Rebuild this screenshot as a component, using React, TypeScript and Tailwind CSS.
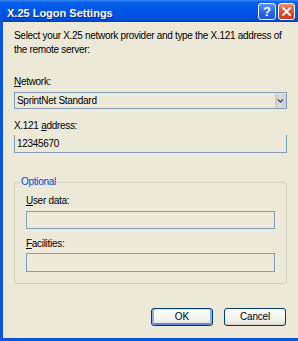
import React from "react";

const font = "font-['Liberation_Sans',Arial,sans-serif]";

function Label({ children }: { children: React.ReactNode }) {
  return (
    <div className="text-[10px] leading-[14px] tracking-[-0.3px] text-black">
      {children}
    </div>
  );
}

export default function App() {
  return (
    <div className={`w-[298px] h-[341px] flex flex-col overflow-hidden bg-[#ece9d8] ${font}`}>
      {/* Title bar */}
      <div className="h-[22px] flex items-center justify-between pl-[7px] pr-[3px] bg-[linear-gradient(180deg,#3b8cf6_0%,#0a60ea_10%,#0058e6_30%,#0054e3_60%,#0050db_85%,#0042bd_100%)]">
        <span className="text-white font-bold text-[11px] leading-[14px] pt-[3px] [text-shadow:1px_1px_0_#0a2a8a]">
          X.25 Logon Settings
        </span>
        <div className="flex items-center gap-[2px]">
          <div className="w-[18px] h-[17px] rounded-[3px] border border-white bg-[linear-gradient(180deg,#5b95f8_0%,#2a67ec_50%,#1c55dc_100%)] flex items-center justify-center">
            <span className="text-white font-bold text-[13px] leading-none">?</span>
          </div>
          <div className="w-[17px] h-[17px] rounded-[3px] border border-white bg-[linear-gradient(180deg,#f08a6a_0%,#e2532f_50%,#cc3a16_100%)] flex items-center justify-center">
            <svg width="9" height="9" viewBox="0 0 9 9">
              <path d="M1 1 L8 8 M8 1 L1 8" stroke="white" strokeWidth="1.8" strokeLinecap="square" />
            </svg>
          </div>
        </div>
      </div>

      {/* Body */}
      <div className="flex-1 flex flex-col border-l-[3px] border-b-[3px] border-[#0a55e0] pl-[11px] pr-[11px] pt-[7px]">
        <div className="text-[10px] leading-[14px] tracking-[-0.3px] text-black">
          Select your X.25 network provider and type the X.121 address of
          <br />
          the remote server:
        </div>

        <div className="mt-[18px]">
          <Label>
            <u>N</u>etwork:
          </Label>
        </div>
        <div className="mt-[3px] h-[17px] border border-[#7f9db9] flex items-center justify-between">
          <span className="pl-[2px] text-[10px] leading-[14px] tracking-[-0.3px] text-black">
            SprintNet Standard
          </span>
          <div className="w-[11px] h-[14px] mr-[0px] rounded-[1px] bg-[linear-gradient(90deg,#c9c9c2_0%,#dcdcd6_40%,#d2d2cc_100%)] flex items-center justify-center">
            <svg width="7" height="6" viewBox="0 0 7 6">
              <path d="M1 1.5 L3.5 4 L6 1.5" stroke="#2b4f9c" strokeWidth="1.4" fill="none" />
            </svg>
          </div>
        </div>

        <div className="mt-[10px]">
          <Label>
            X.121 <u>a</u>ddress:
          </Label>
        </div>
        <div className="mt-[2px] h-[18px] border-x border-b border-[#7f9db9] flex items-center">
          <span className="pl-[2px] text-[10px] leading-[14px] tracking-[-0.3px] text-black">
            12345670
          </span>
        </div>

        {/* Group box */}
        <div className="relative mt-[29px] h-[102px] border border-[#d0d0bf] rounded-[3px] px-[11px] pt-[11px] flex flex-col">
          <span className="absolute left-[5px] top-[-8px] px-[1px] bg-[#ece9d8] text-[10px] leading-[14px] tracking-[-0.3px] text-[#0046d5]">
            Optional
          </span>
          <Label>
            <u>U</u>ser data:
          </Label>
          <div className="mt-[3px] h-[18px] border border-[#7f9db9]" />
          <div className="mt-[8px]">
            <Label>
              <u>F</u>acilities:
            </Label>
          </div>
          <div className="mt-[2px] h-[19px] border border-[#7f9db9]" />
        </div>

        {/* Buttons */}
        <div className="mt-[24px] flex justify-end gap-[11px] pr-[1px]">
          <div className="w-[62px] h-[18px] rounded-[3px] border border-[#003c74] bg-[linear-gradient(180deg,#ffffff_0%,#f3f3ef_60%,#e3e2da_100%)] shadow-[inset_2px_0_0_#89ade4,inset_-2px_0_0_#89ade4,inset_0_-2px_0_#5c86d6,inset_0_1px_0_#cde0fb] flex items-center justify-center">
            <span className="text-[10px] leading-[14px] text-black">OK</span>
          </div>
          <div className="w-[62px] h-[18px] rounded-[3px] border border-[#003c74] bg-[linear-gradient(180deg,#ffffff_0%,#f3f3ef_60%,#e3e2da_100%)] shadow-[inset_0_-1px_0_#d6d0c5] flex items-center justify-center">
            <span className="text-[10px] leading-[14px] tracking-[-0.2px] text-black">Cancel</span>
          </div>
        </div>
      </div>
    </div>
  );
}
